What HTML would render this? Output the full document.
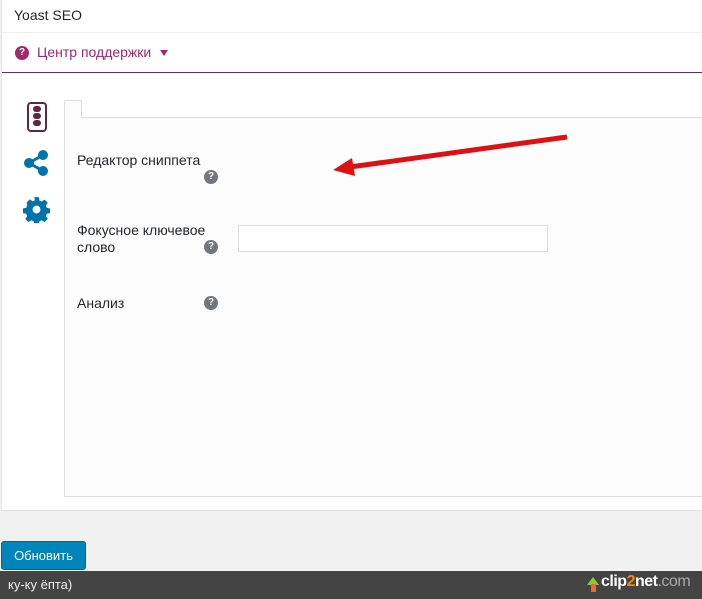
<!DOCTYPE html>
<html><head><meta charset="utf-8"><style>
*{margin:0;padding:0;box-sizing:border-box}
body{width:702px;height:599px;background:#f1f1f1;position:relative;overflow:hidden;font-family:"Liberation Sans","DejaVu Sans",sans-serif;color:#23282d}
.panel{position:absolute;left:1px;top:0;width:710px;height:511px;background:#fff;border-left:1px solid #e5e5e5;border-bottom:1px solid #e2e2e2}
.abs{position:absolute}
.q{position:absolute;width:14px;height:14px;border-radius:50%;background:#72777c;color:#fff;font-size:10px;font-weight:bold;text-align:center;line-height:14px}
.lbl{position:absolute;left:77px;font-size:14px;color:#23282d;line-height:17px}
</style></head><body>
<div class="panel"></div>
<div class="abs" style="left:14px;top:7px;font-size:14px;color:#23282d">Yoast SEO</div>
<div class="abs" style="left:2px;top:32px;width:700px;height:1px;background:#eee"></div>
<div class="abs" style="left:15px;top:46px;width:14px;height:14px;border-radius:50%;background:#a4286a;color:#fff;font-size:10px;font-weight:bold;text-align:center;line-height:14px">?</div>
<div class="abs" style="left:37px;top:44px;font-size:14px;color:#a4286a">Центр поддержки</div>
<div class="abs" style="left:160px;top:50px;width:0;height:0;border-left:4px solid transparent;border-right:4px solid transparent;border-top:6px solid #a4286a"></div>
<div class="abs" style="left:2px;top:72px;width:700px;height:1px;background:#6d2d5c"></div>
<div class="abs" style="left:27px;top:102px;width:20px;height:30px;border:2px solid #5d2846;border-radius:4px"></div>
<div class="abs" style="left:33px;top:106px;width:8px;height:6px;background:#5d2846;border-radius:4px"></div>
<div class="abs" style="left:33px;top:113px;width:8px;height:6px;background:#5d2846;border-radius:4px"></div>
<div class="abs" style="left:33px;top:120px;width:8px;height:6px;background:#5d2846;border-radius:4px"></div>
<svg class="abs" style="left:24px;top:150px" width="26" height="26" viewBox="0 0 26 26"><g fill="#0073aa" stroke="#0073aa"><circle cx="19" cy="5" r="4.5"/><circle cx="5" cy="13" r="4.5"/><circle cx="19" cy="21" r="4.5"/><line x1="5" y1="13" x2="19" y2="5" stroke-width="3"/><line x1="5" y1="13" x2="19" y2="21" stroke-width="3"/></g></svg>
<svg class="abs" style="left:23px;top:196px" width="27" height="27" viewBox="0 0 24 24"><path fill="#0073aa" d="M10 1h4l.6 3 2 .9 2.6-1.7 2.8 2.8-1.7 2.6.9 2 3 .6v4l-3 .6-.9 2 1.7 2.6-2.8 2.8-2.6-1.7-2 .9-.6 3h-4l-.6-3-2-.9-2.6 1.7-2.8-2.8 1.7-2.6-.9-2-3-.6v-4l3-.6.9-2L3.2 5.8 6 3l2.6 1.7 2-.9zM12 8.5a3.5 3.5 0 1 0 0 7 3.5 3.5 0 1 0 0-7z"/></svg>
<div class="abs" style="left:64px;top:100px;width:650px;height:397px;background:#fcfcfc;border:1px solid #ddd;border-right:none"></div>
<div class="abs" style="left:81px;top:100px;width:630px;height:18px;background:#fff;border-left:1px solid #ddd;border-bottom:1px solid #ddd"></div>
<div class="abs" style="left:65px;top:101px;width:16px;height:18px;background:#fcfcfc"></div>
<div class="lbl" style="top:152px">Редактор сниппета</div>
<div class="q" style="left:204px;top:170px">?</div>
<div class="lbl" style="top:222px">Фокусное ключевое<br>слово</div>
<div class="q" style="left:204px;top:240px">?</div>
<div class="abs" style="left:238px;top:225px;width:310px;height:27px;background:#fff;border:1px solid #ddd"></div>
<div class="lbl" style="top:295px">Анализ</div>
<div class="q" style="left:204px;top:296px">?</div>
<svg class="abs" style="left:0;top:0" width="702" height="599"><line x1="567" y1="137" x2="350" y2="167" stroke="#d11" stroke-width="5"/><polygon points="333,170 352,158 355,176" fill="#d11"/></svg>
<div class="abs" style="left:1px;top:541px;width:85px;height:29px;background:#0085ba;border:1px solid #006799;border-radius:3px;color:#fff;font-size:13px;text-align:center;line-height:27px">Обновить</div>
<div class="abs" style="left:0;top:571px;width:702px;height:28px;background:#444"></div>
<div class="abs" style="left:8px;top:577px;font-size:13px;color:#eee">ку-ку ёпта)</div>
<div class="abs" style="left:587px;top:577px;width:0;height:0;border-left:6px solid transparent;border-right:6px solid transparent;border-bottom:8px solid #8c3"></div>
<div class="abs" style="left:591px;top:584px;width:5px;height:8px;background:#e63"></div>
<div class="abs" style="left:601px;top:573px;font-size:16px;font-weight:bold;color:#fff;letter-spacing:-0.5px">clip<span style="color:#f80">2</span>net<span style="color:#aaa;font-weight:normal">.com</span></div>
</body></html>
